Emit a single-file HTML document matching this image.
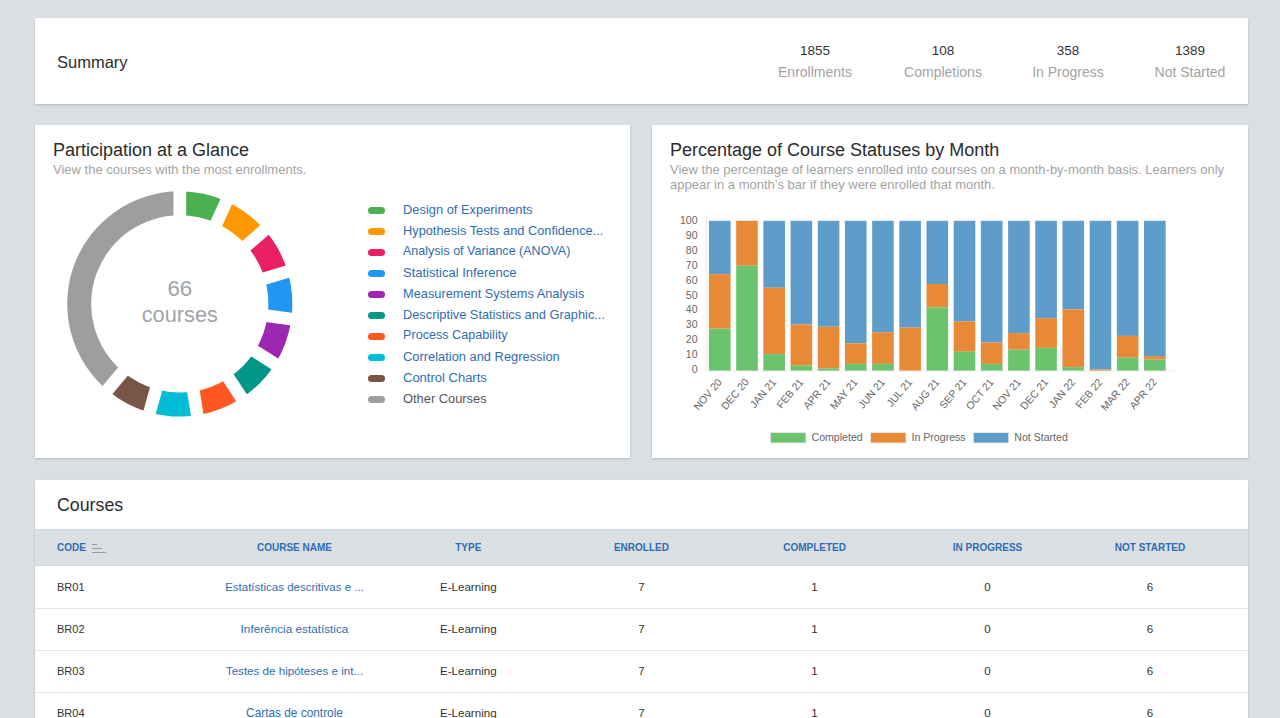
<!DOCTYPE html>
<html><head><meta charset="utf-8"><title>Dashboard</title>
<style>
*{margin:0;padding:0;box-sizing:border-box}
html,body{width:1280px;height:718px;overflow:hidden;background:#dadfe3;font-family:"Liberation Sans",sans-serif;color:#333}
.card{position:absolute;background:#fff;box-shadow:0 1px 2px rgba(0,0,0,.18)}
.abs{position:absolute;white-space:nowrap}
.title{font-size:18px;color:#2b2b2b}
.sub{font-size:13px;color:#a3a3a3;line-height:15px}
.stat{position:absolute;text-align:center;width:120px}
.stat .n{font-size:13.5px;color:#333;line-height:16px}
.stat .l{font-size:14px;color:#a3a3a3;line-height:20px;margin-top:3px}
.leg{position:absolute;left:368px;height:21px;font-size:13px;color:#2f6db3;white-space:nowrap}
.leg i{position:absolute;left:0;top:7px;width:17px;height:7px;border-radius:4px}
.leg span{position:absolute;left:35px;top:2px}
.th{position:absolute;top:542px;font-size:10px;font-weight:bold;color:#2f6db3;text-align:center;width:200px;line-height:12px}
.td{position:absolute;font-size:11.6px;color:#333;text-align:center;width:220px;line-height:14px}
.td a{color:#2f6db3;text-decoration:none}
</style></head><body>

<div class="card" style="left:35px;top:18px;width:1213px;height:86px"></div>
<div class="abs" style="left:57px;top:53px;font-size:16.5px;color:#2b2b2b;line-height:18px">Summary</div>
<div class="stat" style="left:755px;top:43px"><div class="n">1855</div><div class="l">Enrollments</div></div>
<div class="stat" style="left:883px;top:43px"><div class="n">108</div><div class="l">Completions</div></div>
<div class="stat" style="left:1008px;top:43px"><div class="n">358</div><div class="l">In Progress</div></div>
<div class="stat" style="left:1130px;top:43px"><div class="n">1389</div><div class="l">Not Started</div></div>
<div class="card" style="left:35px;top:125px;width:595px;height:333px"></div>
<div class="card" style="left:652px;top:125px;width:596px;height:333px"></div>
<div class="abs title" style="left:53px;top:140px;line-height:20px">Participation at a Glance</div>
<div class="abs sub" style="left:53px;top:162px">View the courses with the most enrollments.</div>
<div class="abs title" style="left:670px;top:140px;line-height:20px">Percentage of Course Statuses by Month</div>
<div class="abs sub" style="left:670px;top:162px">View the percentage of learners enrolled into courses on a month-by-month basis. Learners only<br>appear in a month’s bar if they were enrolled that month.</div>
<svg class="abs" style="left:0;top:0" width="1280" height="718">
<path d="M179.80 191.30 A112.60 112.60 0 0 1 226.40 201.39 L216.46 223.24 A88.60 88.60 0 0 0 179.80 215.30 Z" fill="#4caf50"/>
<path d="M226.40 201.39 A112.60 112.60 0 0 1 264.64 229.86 L246.55 245.64 A88.60 88.60 0 0 0 216.46 223.24 Z" fill="#ff9800"/>
<path d="M264.64 229.86 A112.60 112.60 0 0 1 287.67 271.61 L264.68 278.49 A88.60 88.60 0 0 0 246.55 245.64 Z" fill="#e91e63"/>
<path d="M287.67 271.61 A112.60 112.60 0 0 1 291.36 319.14 L267.58 315.89 A88.60 88.60 0 0 0 264.68 278.49 Z" fill="#2196f3"/>
<path d="M291.36 319.14 A112.60 112.60 0 0 1 275.06 363.94 L254.75 351.14 A88.60 88.60 0 0 0 267.58 315.89 Z" fill="#9c27b0"/>
<path d="M275.06 363.94 A112.60 112.60 0 0 1 241.67 397.98 L228.49 377.92 A88.60 88.60 0 0 0 254.75 351.14 Z" fill="#009688"/>
<path d="M241.67 397.98 A112.60 112.60 0 0 1 197.20 415.15 L193.49 391.44 A88.60 88.60 0 0 0 228.49 377.92 Z" fill="#ff5722"/>
<path d="M197.20 415.15 A112.60 112.60 0 0 1 149.60 412.38 L156.04 389.25 A88.60 88.60 0 0 0 193.49 391.44 Z" fill="#00bcd4"/>
<path d="M149.60 412.38 A112.60 112.60 0 0 1 107.42 390.16 L122.85 371.77 A88.60 88.60 0 0 0 156.04 389.25 Z" fill="#795548"/>
<path d="M107.42 390.16 A112.60 112.60 0 0 1 179.80 191.30 L179.80 215.30 A88.60 88.60 0 0 0 122.85 371.77 Z" fill="#9e9e9e"/>
<line x1="179.80" y1="303.90" x2="179.80" y2="188.30" stroke="#fff" stroke-width="12.70"/>
<line x1="179.80" y1="303.90" x2="227.64" y2="198.66" stroke="#fff" stroke-width="12.70"/>
<line x1="179.80" y1="303.90" x2="266.90" y2="227.89" stroke="#fff" stroke-width="12.70"/>
<line x1="179.80" y1="303.90" x2="290.54" y2="270.75" stroke="#fff" stroke-width="12.70"/>
<line x1="179.80" y1="303.90" x2="294.34" y2="319.54" stroke="#fff" stroke-width="12.70"/>
<line x1="179.80" y1="303.90" x2="277.60" y2="365.54" stroke="#fff" stroke-width="12.70"/>
<line x1="179.80" y1="303.90" x2="243.32" y2="400.48" stroke="#fff" stroke-width="12.70"/>
<line x1="179.80" y1="303.90" x2="197.66" y2="418.11" stroke="#fff" stroke-width="12.70"/>
<line x1="179.80" y1="303.90" x2="148.80" y2="415.27" stroke="#fff" stroke-width="12.70"/>
<line x1="179.80" y1="303.90" x2="105.49" y2="392.45" stroke="#fff" stroke-width="12.70"/>
<text x="179.8" y="295.9" font-family="Liberation Sans" font-size="22.3" fill="#a2a5a8" text-anchor="middle">66</text>
<text x="179.8" y="322.4" font-family="Liberation Sans" font-size="21.8" fill="#a2a5a8" text-anchor="middle">courses</text>
<line x1="706.5" y1="215" x2="706.5" y2="371" stroke="#ececec" stroke-width="1"/>
<line x1="706" y1="371" x2="1175.5" y2="371" stroke="#ececec" stroke-width="1"/>
<rect x="709.00" y="220.80" width="21.60" height="53.33" fill="#5e9cc9"/>
<rect x="709.00" y="274.13" width="21.60" height="54.53" fill="#e88937"/>
<rect x="709.00" y="328.66" width="21.60" height="41.94" fill="#6cc36e"/>
<text transform="translate(722.40 382.40) rotate(-50)" font-family="Liberation Sans" font-size="10.5" fill="#666" text-anchor="end">NOV 20</text>
<rect x="736.19" y="220.80" width="21.60" height="0.00" fill="#5e9cc9"/>
<rect x="736.19" y="220.80" width="21.60" height="44.94" fill="#e88937"/>
<rect x="736.19" y="265.74" width="21.60" height="104.86" fill="#6cc36e"/>
<text transform="translate(749.59 382.40) rotate(-50)" font-family="Liberation Sans" font-size="10.5" fill="#666" text-anchor="end">DEC 20</text>
<rect x="763.38" y="220.80" width="21.60" height="66.96" fill="#5e9cc9"/>
<rect x="763.38" y="287.76" width="21.60" height="66.36" fill="#e88937"/>
<rect x="763.38" y="354.12" width="21.60" height="16.48" fill="#6cc36e"/>
<text transform="translate(776.78 382.40) rotate(-50)" font-family="Liberation Sans" font-size="10.5" fill="#666" text-anchor="end">JAN 21</text>
<rect x="790.57" y="220.80" width="21.60" height="103.66" fill="#5e9cc9"/>
<rect x="790.57" y="324.46" width="21.60" height="40.90" fill="#e88937"/>
<rect x="790.57" y="365.36" width="21.60" height="5.24" fill="#6cc36e"/>
<text transform="translate(803.97 382.40) rotate(-50)" font-family="Liberation Sans" font-size="10.5" fill="#666" text-anchor="end">FEB 21</text>
<rect x="817.76" y="220.80" width="21.60" height="105.91" fill="#5e9cc9"/>
<rect x="817.76" y="326.71" width="21.60" height="41.64" fill="#e88937"/>
<rect x="817.76" y="368.35" width="21.60" height="2.25" fill="#6cc36e"/>
<text transform="translate(831.16 382.40) rotate(-50)" font-family="Liberation Sans" font-size="10.5" fill="#666" text-anchor="end">APR 21</text>
<rect x="844.95" y="220.80" width="21.60" height="122.54" fill="#5e9cc9"/>
<rect x="844.95" y="343.34" width="21.60" height="20.52" fill="#e88937"/>
<rect x="844.95" y="363.86" width="21.60" height="6.74" fill="#6cc36e"/>
<text transform="translate(858.35 382.40) rotate(-50)" font-family="Liberation Sans" font-size="10.5" fill="#666" text-anchor="end">MAY 21</text>
<rect x="872.14" y="220.80" width="21.60" height="111.45" fill="#5e9cc9"/>
<rect x="872.14" y="332.25" width="21.60" height="31.61" fill="#e88937"/>
<rect x="872.14" y="363.86" width="21.60" height="6.74" fill="#6cc36e"/>
<text transform="translate(885.54 382.40) rotate(-50)" font-family="Liberation Sans" font-size="10.5" fill="#666" text-anchor="end">JUN 21</text>
<rect x="899.33" y="220.80" width="21.60" height="106.81" fill="#5e9cc9"/>
<rect x="899.33" y="327.61" width="21.60" height="42.99" fill="#e88937"/>
<text transform="translate(912.73 382.40) rotate(-50)" font-family="Liberation Sans" font-size="10.5" fill="#666" text-anchor="end">JUL 21</text>
<rect x="926.52" y="220.80" width="21.60" height="63.22" fill="#5e9cc9"/>
<rect x="926.52" y="284.02" width="21.60" height="23.37" fill="#e88937"/>
<rect x="926.52" y="307.38" width="21.60" height="63.22" fill="#6cc36e"/>
<text transform="translate(939.92 382.40) rotate(-50)" font-family="Liberation Sans" font-size="10.5" fill="#666" text-anchor="end">AUG 21</text>
<rect x="953.71" y="220.80" width="21.60" height="100.67" fill="#5e9cc9"/>
<rect x="953.71" y="321.47" width="21.60" height="30.26" fill="#e88937"/>
<rect x="953.71" y="351.73" width="21.60" height="18.87" fill="#6cc36e"/>
<text transform="translate(967.11 382.40) rotate(-50)" font-family="Liberation Sans" font-size="10.5" fill="#666" text-anchor="end">SEP 21</text>
<rect x="980.90" y="220.80" width="21.60" height="121.64" fill="#5e9cc9"/>
<rect x="980.90" y="342.44" width="21.60" height="21.42" fill="#e88937"/>
<rect x="980.90" y="363.86" width="21.60" height="6.74" fill="#6cc36e"/>
<text transform="translate(994.30 382.40) rotate(-50)" font-family="Liberation Sans" font-size="10.5" fill="#666" text-anchor="end">OCT 21</text>
<rect x="1008.09" y="220.80" width="21.60" height="112.35" fill="#5e9cc9"/>
<rect x="1008.09" y="333.15" width="21.60" height="16.48" fill="#e88937"/>
<rect x="1008.09" y="349.63" width="21.60" height="20.97" fill="#6cc36e"/>
<text transform="translate(1021.49 382.40) rotate(-50)" font-family="Liberation Sans" font-size="10.5" fill="#666" text-anchor="end">NOV 21</text>
<rect x="1035.28" y="220.80" width="21.60" height="97.37" fill="#5e9cc9"/>
<rect x="1035.28" y="318.17" width="21.60" height="29.66" fill="#e88937"/>
<rect x="1035.28" y="347.83" width="21.60" height="22.77" fill="#6cc36e"/>
<text transform="translate(1048.68 382.40) rotate(-50)" font-family="Liberation Sans" font-size="10.5" fill="#666" text-anchor="end">DEC 21</text>
<rect x="1062.47" y="220.80" width="21.60" height="88.53" fill="#5e9cc9"/>
<rect x="1062.47" y="309.33" width="21.60" height="57.82" fill="#e88937"/>
<rect x="1062.47" y="367.15" width="21.60" height="3.45" fill="#6cc36e"/>
<text transform="translate(1075.87 382.40) rotate(-50)" font-family="Liberation Sans" font-size="10.5" fill="#666" text-anchor="end">JAN 22</text>
<rect x="1089.66" y="220.80" width="21.60" height="148.75" fill="#5e9cc9"/>
<rect x="1089.66" y="369.55" width="21.60" height="1.05" fill="#e88937"/>
<text transform="translate(1103.06 382.40) rotate(-50)" font-family="Liberation Sans" font-size="10.5" fill="#666" text-anchor="end">FEB 22</text>
<rect x="1116.85" y="220.80" width="21.60" height="115.05" fill="#5e9cc9"/>
<rect x="1116.85" y="335.85" width="21.60" height="21.87" fill="#e88937"/>
<rect x="1116.85" y="357.72" width="21.60" height="12.88" fill="#6cc36e"/>
<text transform="translate(1130.25 382.40) rotate(-50)" font-family="Liberation Sans" font-size="10.5" fill="#666" text-anchor="end">MAR 22</text>
<rect x="1144.04" y="220.80" width="21.60" height="135.27" fill="#5e9cc9"/>
<rect x="1144.04" y="356.07" width="21.60" height="3.45" fill="#e88937"/>
<rect x="1144.04" y="359.51" width="21.60" height="11.09" fill="#6cc36e"/>
<text transform="translate(1157.44 382.40) rotate(-50)" font-family="Liberation Sans" font-size="10.5" fill="#666" text-anchor="end">APR 22</text>
<text x="697.5" y="373.40" font-family="Liberation Sans" font-size="10.5" fill="#666" text-anchor="end">0</text>
<text x="697.5" y="358.42" font-family="Liberation Sans" font-size="10.5" fill="#666" text-anchor="end">10</text>
<text x="697.5" y="343.44" font-family="Liberation Sans" font-size="10.5" fill="#666" text-anchor="end">20</text>
<text x="697.5" y="328.46" font-family="Liberation Sans" font-size="10.5" fill="#666" text-anchor="end">30</text>
<text x="697.5" y="313.48" font-family="Liberation Sans" font-size="10.5" fill="#666" text-anchor="end">40</text>
<text x="697.5" y="298.50" font-family="Liberation Sans" font-size="10.5" fill="#666" text-anchor="end">50</text>
<text x="697.5" y="283.52" font-family="Liberation Sans" font-size="10.5" fill="#666" text-anchor="end">60</text>
<text x="697.5" y="268.54" font-family="Liberation Sans" font-size="10.5" fill="#666" text-anchor="end">70</text>
<text x="697.5" y="253.56" font-family="Liberation Sans" font-size="10.5" fill="#666" text-anchor="end">80</text>
<text x="697.5" y="238.58" font-family="Liberation Sans" font-size="10.5" fill="#666" text-anchor="end">90</text>
<text x="697.5" y="223.60" font-family="Liberation Sans" font-size="10.5" fill="#666" text-anchor="end">100</text>
<rect x="770.50" y="432.5" width="35.5" height="10.5" fill="#6cc36e" stroke="#e6e6e6" stroke-width="1"/>
<text x="811.50" y="440.5" font-family="Liberation Sans" font-size="10.6" fill="#666">Completed</text>
<rect x="870.50" y="432.5" width="35.5" height="10.5" fill="#e88937" stroke="#e6e6e6" stroke-width="1"/>
<text x="911.50" y="440.5" font-family="Liberation Sans" font-size="10.6" fill="#666">In Progress</text>
<rect x="973.25" y="432.5" width="35.5" height="10.5" fill="#5e9cc9" stroke="#e6e6e6" stroke-width="1"/>
<text x="1014.25" y="440.5" font-family="Liberation Sans" font-size="10.6" fill="#666">Not Started</text>
</svg>
<div class="leg" style="top:200px"><i style="background:#4caf50"></i><span style="color:#2f6db3;font-size:12.88px">Design of Experiments</span></div>
<div class="leg" style="top:221px"><i style="background:#ff9800"></i><span style="color:#2f6db3;font-size:12.80px">Hypothesis Tests and Confidence...</span></div>
<div class="leg" style="top:242px"><i style="background:#e91e63"></i><span style="color:#2f6db3;font-size:12.54px">Analysis of Variance (ANOVA)</span></div>
<div class="leg" style="top:263px"><i style="background:#2196f3"></i><span style="color:#2f6db3;font-size:13.00px">Statistical Inference</span></div>
<div class="leg" style="top:284px"><i style="background:#9c27b0"></i><span style="color:#2f6db3;font-size:12.80px">Measurement Systems Analysis</span></div>
<div class="leg" style="top:305px"><i style="background:#009688"></i><span style="color:#2f6db3;font-size:12.80px">Descriptive Statistics and Graphic...</span></div>
<div class="leg" style="top:326px"><i style="background:#ff5722"></i><span style="color:#2f6db3;font-size:12.64px">Process Capability</span></div>
<div class="leg" style="top:347px"><i style="background:#00bcd4"></i><span style="color:#2f6db3;font-size:12.88px">Correlation and Regression</span></div>
<div class="leg" style="top:368px"><i style="background:#795548"></i><span style="color:#2f6db3;font-size:13.00px">Control Charts</span></div>
<div class="leg" style="top:389px"><i style="background:#9e9e9e"></i><span style="color:#555;font-size:12.87px">Other Courses</span></div>
<div class="card" style="left:35px;top:480px;width:1213px;height:260px"></div>
<div class="abs" style="left:57px;top:495px;font-size:17.8px;color:#2b2b2b;line-height:20px">Courses</div>
<div class="abs" style="left:35px;top:529px;width:1213px;height:37px;background:#dadfe3;border-top:1px solid #d2d7db;border-bottom:1px solid #d2d7db"></div>
<div class="th" style="left:57px;width:auto;text-align:left">CODE</div>
<div class="abs" style="left:92px;top:544px;width:5px;height:1px;background:#999"></div>
<div class="abs" style="left:92px;top:548px;width:9.5px;height:1px;background:#999"></div>
<div class="abs" style="left:92px;top:552px;width:14px;height:1px;background:#999"></div>
<div class="th" style="left:194.5px">COURSE NAME</div>
<div class="th" style="left:368.3px">TYPE</div>
<div class="th" style="left:541.4px">ENROLLED</div>
<div class="th" style="left:714.6px">COMPLETED</div>
<div class="th" style="left:887.5px">IN PROGRESS</div>
<div class="th" style="left:1050.0px">NOT STARTED</div>
<div class="td" style="left:57px;top:580px;width:auto;text-align:left;font-size:11px">BR01</div>
<div class="td" style="left:184.5px;top:580px"><a style="font-size:11.50px">Estatísticas descritivas e ...</a></div>
<div class="td" style="left:358.3px;top:580px">E-Learning</div>
<div class="td" style="left:531.4px;top:580px">7</div>
<div class="td" style="left:704.6px;top:580px">1</div>
<div class="td" style="left:877.5px;top:580px">0</div>
<div class="td" style="left:1040.0px;top:580px">6</div>
<div class="abs" style="left:35px;top:608px;width:1213px;height:1px;background:#e3e5e7"></div>
<div class="td" style="left:57px;top:622px;width:auto;text-align:left;font-size:11px">BR02</div>
<div class="td" style="left:184.5px;top:622px"><a style="font-size:11.75px">Inferência estatística</a></div>
<div class="td" style="left:358.3px;top:622px">E-Learning</div>
<div class="td" style="left:531.4px;top:622px">7</div>
<div class="td" style="left:704.6px;top:622px">1</div>
<div class="td" style="left:877.5px;top:622px">0</div>
<div class="td" style="left:1040.0px;top:622px">6</div>
<div class="abs" style="left:35px;top:650px;width:1213px;height:1px;background:#e3e5e7"></div>
<div class="td" style="left:57px;top:664px;width:auto;text-align:left;font-size:11px">BR03</div>
<div class="td" style="left:184.5px;top:664px"><a style="font-size:11.60px">Testes de hipóteses e int...</a></div>
<div class="td" style="left:358.3px;top:664px">E-Learning</div>
<div class="td" style="left:531.4px;top:664px">7</div>
<div class="td" style="left:704.6px;top:664px">1</div>
<div class="td" style="left:877.5px;top:664px">0</div>
<div class="td" style="left:1040.0px;top:664px">6</div>
<div class="abs" style="left:35px;top:692px;width:1213px;height:1px;background:#e3e5e7"></div>
<div class="td" style="left:57px;top:706px;width:auto;text-align:left;font-size:11px">BR04</div>
<div class="td" style="left:184.5px;top:706px"><a style="font-size:11.85px">Cartas de controle</a></div>
<div class="td" style="left:358.3px;top:706px">E-Learning</div>
<div class="td" style="left:531.4px;top:706px">7</div>
<div class="td" style="left:704.6px;top:706px">1</div>
<div class="td" style="left:877.5px;top:706px">0</div>
<div class="td" style="left:1040.0px;top:706px">6</div>
</body></html>
